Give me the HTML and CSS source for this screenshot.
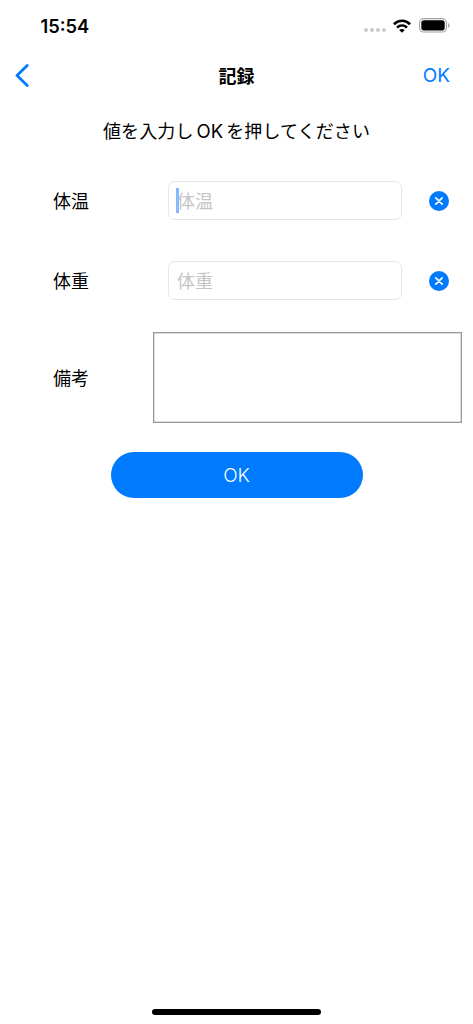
FILE: index.html
```html
<!DOCTYPE html>
<html lang="ja">
<head>
<meta charset="utf-8">
<title>記録</title>
<link rel="stylesheet" href="styles.css">
</head>
<body>
<div class="screen">
  <div class="status">
    <span class="time">15:54</span>
    <div class="indicators">
      <svg width="22" height="4" viewBox="0 0 22 4" fill="#ccc"><circle cx="2" cy="2" r="2"/><circle cx="8" cy="2" r="2"/><circle cx="14" cy="2" r="2"/><circle cx="20" cy="2" r="2"/></svg>
      <svg class="wifi" width="18" height="14" viewBox="0 0 18 14"><g fill="none" stroke="#000" stroke-width="2.7"><path d="M.9 5.2C5.5.6 12.5.6 17.1 5.2"/><path d="M4 8.6c2.9-2.8 7.1-2.8 10 0"/></g><path d="M6.2 11c1.6-1.5 4-1.5 5.6 0L9 13.8z"/></svg>
      <svg class="battery" width="31" height="15" viewBox="0 0 31 15"><rect x=".6" y=".6" width="26.8" height="13.4" rx="4" fill="none" stroke="#a5a5a5" stroke-width="1.1"/><rect x="2.3" y="2.2" width="23.4" height="10.2" rx="2.6"/><path d="M29 5c2 .8 2 4 0 4.8z" fill="#a5a5a5"/></svg>
    </div>
  </div>
  <header class="nav">
    <button class="back" aria-label="戻る"><svg width="14" height="23" viewBox="0 0 14 23"><path d="M12.2 1.6 2 11.5l10.2 9.9" fill="none" stroke="#007aff" stroke-width="2.8" stroke-linecap="round" stroke-linejoin="round"/></svg></button>
    <h1 class="title">記録</h1>
    <button class="done">OK</button>
  </header>
  <p class="prompt">値を入力し<span class="latin">OK</span>を押してください</p>
  <main class="form">
    <div class="row">
      <span class="label">体温</span>
      <div class="field focused">体温</div>
      <button class="clear" aria-label="消去"><svg width="20" height="20" viewBox="0 0 20 20"><circle cx="10" cy="10" r="10" fill="#007aff"/><path d="m6.8 6.8 6.4 6.4m0-6.4-6.4 6.4" stroke="#fff" stroke-width="1.7" stroke-linecap="round"/></svg></button>
    </div>
    <div class="row">
      <span class="label">体重</span>
      <div class="field">体重</div>
      <button class="clear" aria-label="消去"><svg width="20" height="20" viewBox="0 0 20 20"><circle cx="10" cy="10" r="10" fill="#007aff"/><path d="m6.8 6.8 6.4 6.4m0-6.4-6.4 6.4" stroke="#fff" stroke-width="1.7" stroke-linecap="round"/></svg></button>
    </div>
    <div class="note-row">
      <span class="label">備考</span>
      <div class="note"></div>
    </div>
  </main>
  <button class="submit">OK</button>
  <div class="home"></div>
</div>
</body>
</html>
```
FILE: styles.css
```css
* { box-sizing: border-box; }
body {
  margin: 0;
  background: #fff;
  color: #000;
  font-family: Inter, "Noto Sans CJK JP", sans-serif;
  font-size: 18px;
}
button {
  border: 0;
  padding: 0;
  background: none;
  font: inherit;
}
svg { display: block; }
.screen {
  display: flex;
  flex-direction: column;
  height: 1024px;
}
.status {
  display: flex;
  justify-content: space-between;
  align-items: center;
  height: 52px;
  padding: 0 24px 0 40.5px;
}
.time {
  font-size: 18.3px;
  font-weight: 600;
}
.indicators {
  display: flex;
  align-items: center;
  margin: -1px -1px 0 0;
}
.indicators > :first-child { margin-top: 9px; }
.wifi { margin: 0 8px 0 7px; }
.nav {
  display: grid;
  grid-template-columns: 1fr auto 1fr;
  align-items: center;
  height: 47px;
  padding: 0 23px 0 15px;
}
.title {
  margin: 2px 0 0 8px;
  font-size: 18px;
  font-weight: 700;
  line-height: 26px;
}
.done {
  justify-self: end;
  color: #007aff;
  font-size: 19px;
  line-height: 26px;
}
.prompt {
  margin: 19px 0 0;
  text-align: center;
  line-height: 26px;
  letter-spacing: 0.1px;
}
.latin {
  margin: 0 3px;
  font-size: 18.5px;
}
.form { padding: 36px 11px 0 53px; }
.row, .note-row {
  display: flex;
  align-items: center;
}
.row {
  height: 39px;
  margin-bottom: 41px;
}
.label {
  width: 115px;
  padding-top: 2px;
  line-height: 26px;
}
.field {
  position: relative;
  width: 234px;
  height: 39px;
  padding: 1px 0 0 8px;
  border: 1px solid #e6e6e7;
  border-radius: 7px;
  color: #c5c5c7;
  line-height: 37px;
}
.focused::before {
  content: "";
  position: absolute;
  left: 7px;
  top: 6px;
  width: 3px;
  height: 25px;
  background: #84bbff;
}
.clear { margin-left: 27px; }
.note-row { margin-top: -9px; }
.note-row .label { width: 100px; }
.note {
  flex: 1;
  height: 91px;
  border: 1px solid #999;
  box-shadow: inset 0 0 0 0.5px #bbb;
}
.submit {
  align-self: center;
  width: 252px;
  height: 46px;
  margin-top: 29px;
  border-radius: 23px;
  background: #007aff;
  color: #fff;
  font-size: 19px;
  font-weight: 300;
}
.home {
  align-self: center;
  width: 169px;
  height: 6px;
  margin: auto 0 9px;
  border-radius: 3px;
  background: #000;
}
```
